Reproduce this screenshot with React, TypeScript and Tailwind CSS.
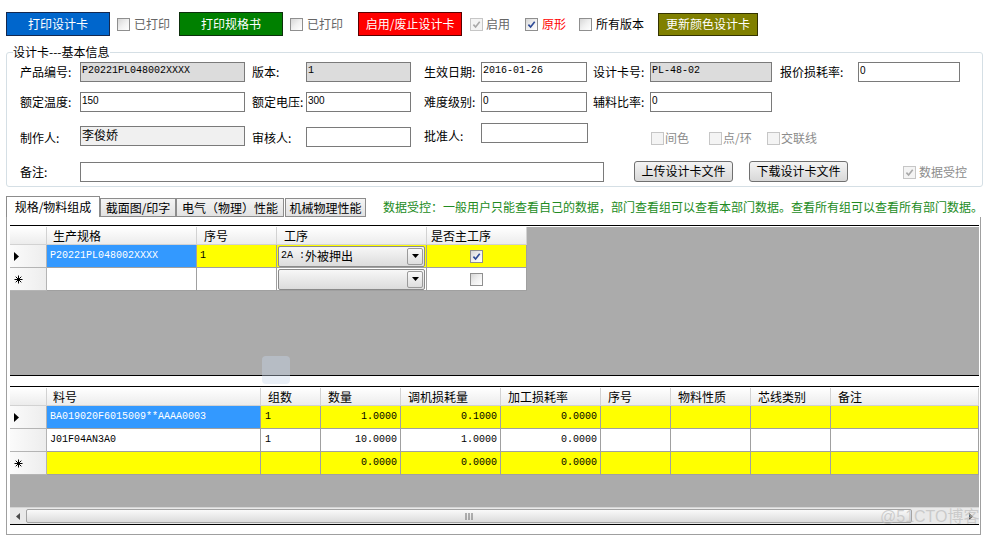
import React from "react";

const MONO = "[font-family:'Liberation_Mono',monospace] text-[10px] leading-[12px]";
const SANS = "[font-family:'Liberation_Sans',sans-serif] text-[10px] leading-[12px]";

function Check({ checked = false, disabled = false, className = "" }: { checked?: boolean; disabled?: boolean; className?: string }) {
  return (
    <span
      className={
        (disabled
          ? "inline-flex items-center justify-center w-[13px] h-[13px] shrink-0 border border-[#c6c6c6] bg-[#f4f4f4] "
          : "inline-flex items-center justify-center w-[13px] h-[13px] shrink-0 border border-[#8f8f8f] bg-linear-to-br from-[#d6d6d6] via-[#f0f0f0] to-white ") + className
      }
    >
      {checked && (
        <svg width="9" height="9" viewBox="0 0 9 9">
          <path d="M1.4 4.6 L3.6 7.1 L7.7 1.7" fill="none" stroke={disabled ? "#a9a9a9" : "#2d4a97"} strokeWidth="1.6" />
        </svg>
      )}
    </span>
  );
}

function RowTri() {
  return (
    <svg width="5" height="9" viewBox="0 0 5 9">
      <path d="M0 0 L5 4.5 L0 9 Z" fill="#000" />
    </svg>
  );
}

function RowStar() {
  return (
    <svg width="9" height="9" viewBox="0 0 9 9">
      <path d="M4.5 0.5V8.5M0.5 4.5H8.5M1.7 1.7L7.3 7.3M7.3 1.7L1.7 7.3" stroke="#000" strokeWidth="1" fill="none" />
    </svg>
  );
}

function Combo({ children }: { children?: React.ReactNode }) {
  return (
    <div className="flex-1 h-[21px] border border-[#8a8a8a] rounded-[2px] bg-linear-to-b from-[#f7f7f7] to-[#dcdcdc] flex items-stretch">
      <div className="flex-1 flex items-center pl-[2px] overflow-hidden whitespace-nowrap">{children}</div>
      <div className="w-[16px] border border-[#9a9a9a] rounded-[2px] m-px bg-linear-to-b from-[#fafafa] to-[#dedede] flex items-center justify-center">
        <svg width="7" height="4" viewBox="0 0 7 4">
          <path d="M0 0H7L3.5 4Z" fill="#000" />
        </svg>
      </div>
    </div>
  );
}

const HDR = "h-[18px] border-r border-b border-[#d2d2d2] bg-linear-to-b from-white to-[#ececec] flex items-center whitespace-nowrap";
const RH = "w-[37px] h-[23px] shrink-0 border-r border-b border-[#b4b4b4] bg-linear-to-r from-[#fbfbfb] to-[#ededed] flex items-center";
const CELL = "h-[23px] shrink-0 border-r border-b border-[#a0a0a0] flex items-center overflow-hidden whitespace-nowrap";

const G2W = ["w-[214px]", "w-[60px]", "w-[80px]", "w-[100px]", "w-[100px]", "w-[70px]", "w-[80px]", "w-[80px]", "w-[148px]"];
const G2H = ["料号", "组数", "数量", "调机损耗量", "加工损耗率", "序号", "物料性质", "芯线类别", "备注"];

function G2Row({ bg, first, cells, hdr }: { bg: string; first: string; cells: string[]; hdr: React.ReactNode }) {
  return (
    <div className="flex">
      <div className={RH + " pl-[4px]"}>{hdr}</div>
      {G2W.map((w, i) => {
        const isSel = i === 0 && first === "sel";
        const bgc = isSel ? "bg-[#3399ff] text-white" : bg;
        const align = i >= 2 ? "justify-end pr-[3px]" : i === 1 ? "pl-[4px]" : "pl-[3px]";
        return (
          <div key={i} className={CELL + " " + w + " " + bgc + " " + align + " " + MONO}>
            {cells[i]}
          </div>
        );
      })}
    </div>
  );
}

export default function App() {
  return (
    <div className="relative w-[990px] h-[538px] overflow-hidden bg-white text-[12px] leading-[14px] text-black [font-family:'Noto_Sans_CJK_SC','Noto_Sans',sans-serif]">
      {/* toolbar */}
      <div className="flex items-center h-[24px] mt-[12px] pl-[6px] whitespace-nowrap">
        <div className="w-[104px] h-[24px] bg-[#0066cc] border border-[#14284f] text-white flex items-center justify-center">打印设计卡</div>
        <Check className="ml-[7px]" />
        <span className="ml-[4px] text-[#666]">已打印</span>
        <div className="ml-[9px] w-[104px] h-[24px] bg-[#008000] border border-[#0d300d] text-white flex items-center justify-center">打印规格书</div>
        <Check className="ml-[7px]" />
        <span className="ml-[4px] text-[#666]">已打印</span>
        <div className="ml-[15px] w-[104px] h-[24px] bg-[#ff0000] border border-[#5a0000] text-white flex items-center justify-center">启用/废止设计卡</div>
        <Check className="ml-[8px]" checked disabled />
        <span className="ml-[3px] text-[#666]">启用</span>
        <Check className="ml-[15px]" checked />
        <span className="ml-[4px] text-[#ff0000]">原形</span>
        <Check className="ml-[13px]" />
        <span className="ml-[4px]">所有版本</span>
        <div className="ml-[14px] w-[100px] h-[23px] bg-[#808000] border border-[#333300] text-white flex items-center justify-center">更新颜色设计卡</div>
      </div>

      {/* group box */}
      <fieldset className="ml-[6px] mt-[9px] w-[977px] border border-[#d5dfe5] rounded-[3px] px-0 pt-0 pb-[4px]">
        <legend className="ml-[6px] px-0 leading-[14px]">设计卡---基本信息</legend>

        <div className="flex items-center h-[20px] mt-[3px] pl-[13px] whitespace-nowrap">
          <span className="w-[60px] shrink-0">产品编号:</span>
          <div className={"w-[165px] h-[20px] shrink-0 border border-[#7a7a7a] bg-[#dcdcdc] pl-[1px] pt-[2px] " + MONO}>P20221PL048002XXXX</div>
          <span className="ml-[7px] w-[54px] shrink-0">版本:</span>
          <div className={"w-[105px] h-[20px] shrink-0 border border-[#7a7a7a] bg-[#dcdcdc] pl-[1px] pt-[2px] " + MONO}>1</div>
          <span className="ml-[13px] w-[57px] shrink-0">生效日期:</span>
          <div className={"w-[106px] h-[20px] shrink-0 border border-[#7a7a7a] bg-white pl-[1px] pt-[2px] " + MONO}>2016-01-26</div>
          <span className="ml-[6px] w-[57px] shrink-0">设计卡号:</span>
          <div className={"w-[122px] h-[20px] shrink-0 border border-[#7a7a7a] bg-[#dcdcdc] pl-[1px] pt-[2px] " + MONO}>PL-48-02</div>
          <span className="ml-[8px] w-[78px] shrink-0">报价损耗率:</span>
          <div className={"w-[102px] h-[20px] shrink-0 border border-[#7a7a7a] bg-white pl-[1px] pt-[2px] " + SANS}>0</div>
        </div>

        <div className="flex items-center h-[20px] mt-[10px] pl-[13px] whitespace-nowrap">
          <span className="w-[60px] shrink-0">额定温度:</span>
          <div className={"w-[165px] h-[20px] shrink-0 border border-[#7a7a7a] bg-white pl-[1px] pt-[2px] " + SANS}>150</div>
          <span className="ml-[7px] w-[54px] shrink-0">额定电压:</span>
          <div className={"w-[105px] h-[20px] shrink-0 border border-[#7a7a7a] bg-white pl-[1px] pt-[2px] " + SANS}>300</div>
          <span className="ml-[13px] w-[57px] shrink-0">难度级别:</span>
          <div className={"w-[106px] h-[20px] shrink-0 border border-[#7a7a7a] bg-white pl-[1px] pt-[2px] " + SANS}>0</div>
          <span className="ml-[6px] w-[57px] shrink-0">辅料比率:</span>
          <div className={"w-[122px] h-[20px] shrink-0 border border-[#7a7a7a] bg-white pl-[1px] pt-[2px] " + SANS}>0</div>
        </div>

        <div className="flex items-center h-[20px] mt-[14px] pl-[13px] whitespace-nowrap">
          <span className="w-[60px] shrink-0 mt-[4px]">制作人:</span>
          <div className="w-[165px] h-[20px] shrink-0 border border-[#7a7a7a] bg-[#f0f0f0] pl-[1px] leading-[16px]">李俊娇</div>
          <span className="ml-[7px] w-[54px] shrink-0 mt-[4px]">审核人:</span>
          <div className="w-[105px] h-[20px] shrink-0 border border-[#7a7a7a] bg-white mt-[2px]" />
          <span className="ml-[13px] w-[57px] shrink-0">批准人:</span>
          <div className="w-[107px] h-[20px] shrink-0 border border-[#7a7a7a] bg-white -mt-[6px]" />
          <Check className="ml-[63px] mt-[4px]" disabled />
          <span className="w-[45px] pl-[1px] shrink-0 text-[#8c8c8c] mt-[4px]">间色</span>
          <Check className="mt-[4px]" disabled />
          <span className="w-[45px] pl-[1px] shrink-0 text-[#8c8c8c] mt-[4px]">点/环</span>
          <Check className="mt-[4px]" disabled />
          <span className="pl-[1px] text-[#8c8c8c] mt-[4px]">交联线</span>
        </div>

        <div className="flex items-center h-[20px] mt-[16px] pl-[13px] whitespace-nowrap">
          <span className="w-[60px] shrink-0">备注:</span>
          <div className="w-[524px] h-[20px] shrink-0 border border-[#7a7a7a] bg-white" />
          <div className="ml-[30px] w-[99px] h-[21px] shrink-0 -mt-[2px] border border-[#707070] rounded-[3px] bg-linear-to-b from-[#f4f4f4] to-[#d8d8d8] flex items-center justify-center">上传设计卡文件</div>
          <div className="ml-[16px] w-[99px] h-[21px] shrink-0 -mt-[2px] border border-[#707070] rounded-[3px] bg-linear-to-b from-[#f4f4f4] to-[#d8d8d8] flex items-center justify-center">下载设计卡文件</div>
          <Check className="ml-[55px]" checked disabled />
          <span className="ml-[3px] text-[#8c8c8c]">数据受控</span>
        </div>
      </fieldset>

      {/* tabs */}
      <div className="flex items-end h-[21px] mt-[9px] pl-[6px] whitespace-nowrap">
        <div className="w-[94px] h-[21px] border-t border-x border-[#8c8c8c] bg-white flex items-center justify-center">规格/物料组成</div>
        <div className="w-[76px] h-[19px] border border-[#8c8c8c] bg-linear-to-b from-[#f4f4f4] to-[#e2e2e2] flex items-center justify-center">截面图/印字</div>
        <div className="w-[108px] h-[19px] border border-[#8c8c8c] bg-linear-to-b from-[#f4f4f4] to-[#e2e2e2] flex items-center justify-center">电气（物理）性能</div>
        <div className="ml-[1px] w-[81px] h-[19px] border border-[#8c8c8c] bg-linear-to-b from-[#f4f4f4] to-[#e2e2e2] flex items-center justify-center">机械物理性能</div>
        <span className="ml-[17px] self-center text-[#228b22]">数据受控：一般用户只能查看自己的数据，部门查看组可以查看本部门数据。查看所有组可以查看所有部门数据。</span>
      </div>

      {/* tab panel */}
      <div className="ml-[6px] w-[975px] h-[318px] border-x border-b border-[#a0a0a0] pt-[8px] pl-[3px]">
        {/* grid 1 */}
        <div className="w-[969px] h-[151px] border-y border-black bg-[#ababab] flex flex-col">
          <div className="h-px bg-white shrink-0" />
          <div className="flex shrink-0">
            <div className={HDR + " w-[37px]"} />
            <div className={HDR + " w-[150px] pl-[6px]"}>生产规格</div>
            <div className={HDR + " w-[80px] pl-[7px]"}>序号</div>
            <div className={HDR + " w-[150px] pl-[7px]"}>工序</div>
            <div className={HDR + " w-[100px] pl-[4px]"}>是否主工序</div>
          </div>
          <div className="flex shrink-0">
            <div className={RH + " pl-[4px]"}><RowTri /></div>
            <div className={CELL + " w-[150px] bg-[#3399ff] text-white pl-[3px] " + MONO}>P20221PL048002XXXX</div>
            <div className={CELL + " w-[80px] bg-[#ffff00] pl-[3px] " + MONO}>1</div>
            <div className={CELL + " w-[150px] bg-[#ffff00] px-px"}>
              <Combo>
                <span className={MONO}>2A :</span>
                <span className="leading-[14px]">外被押出</span>
              </Combo>
            </div>
            <div className={CELL + " w-[100px] bg-[#ffff00] justify-center"}><Check checked /></div>
          </div>
          <div className="flex shrink-0">
            <div className={RH + " pl-[4px]"}><RowStar /></div>
            <div className={CELL + " w-[150px] bg-white"} />
            <div className={CELL + " w-[80px] bg-white"} />
            <div className={CELL + " w-[150px] bg-white px-px"}>
              <Combo />
            </div>
            <div className={CELL + " w-[100px] bg-white justify-center"}><Check /></div>
          </div>
        </div>

        {/* grid 2 */}
        <div className="mt-[10px] w-[969px] h-[139px] border-y border-black bg-[#ababab] flex flex-col">
          <div className="h-px bg-white shrink-0" />
          <div className="flex shrink-0">
            <div className={HDR + " w-[37px]"} />
            {G2W.map((w, i) => (
              <div key={i} className={HDR + " " + w + (i === 0 ? " pl-[6px]" : " pl-[7px]")}>
                {G2H[i]}
              </div>
            ))}
          </div>
          <G2Row
            bg="bg-[#ffff00]"
            first="sel"
            hdr={<RowTri />}
            cells={["BA019020F6015009**AAAA0003", "1", "1.0000", "0.1000", "0.0000", "", "", "", ""]}
          />
          <G2Row
            bg="bg-white"
            first=""
            hdr={null}
            cells={["J01F04AN3A0", "1", "10.0000", "1.0000", "0.0000", "", "", "", ""]}
          />
          <G2Row
            bg="bg-[#ffff00]"
            first=""
            hdr={<RowStar />}
            cells={["", "", "0.0000", "0.0000", "0.0000", "", "", "", ""]}
          />
          <div className="flex-1" />
          {/* horizontal scrollbar */}
          <div className="h-[17px] shrink-0 flex bg-[#e9e9e9] border-t border-[#d4d4d4]">
            <div className="w-[16px] flex items-center justify-center">
              <svg width="4" height="7" viewBox="0 0 4 7">
                <path d="M4 0V7L0 3.5Z" fill="#4a4a4a" />
              </svg>
            </div>
            <div className="w-[886px] my-px border border-[#a3a3a3] rounded-[2px] bg-linear-to-b from-[#fafafa] to-[#dcdcdc] flex items-center justify-center">
              <svg width="8" height="7" viewBox="0 0 8 7">
                <path d="M1 0V7M4 0V7M7 0V7" stroke="#6a6a6a" strokeWidth="1" />
              </svg>
            </div>
            <div className="flex-1" />
            <div className="w-[16px] flex items-center justify-center">
              <svg width="4" height="7" viewBox="0 0 4 7">
                <path d="M0 0V7L4 3.5Z" fill="#4a4a4a" />
              </svg>
            </div>
          </div>
        </div>
      </div>

      {/* faint watermarks */}
      <div className="absolute left-[262px] top-[356px] w-[28px] h-[28px] rounded-[4px] bg-[#c9d8ec]/40" />
      <div className="absolute left-[880px] top-[507px] text-[16px] leading-[20px] text-[#bdbdbd]/70 [font-family:'Liberation_Sans','Noto_Sans_CJK_SC',sans-serif]">@51CTO博客</div>
    </div>
  );
}
